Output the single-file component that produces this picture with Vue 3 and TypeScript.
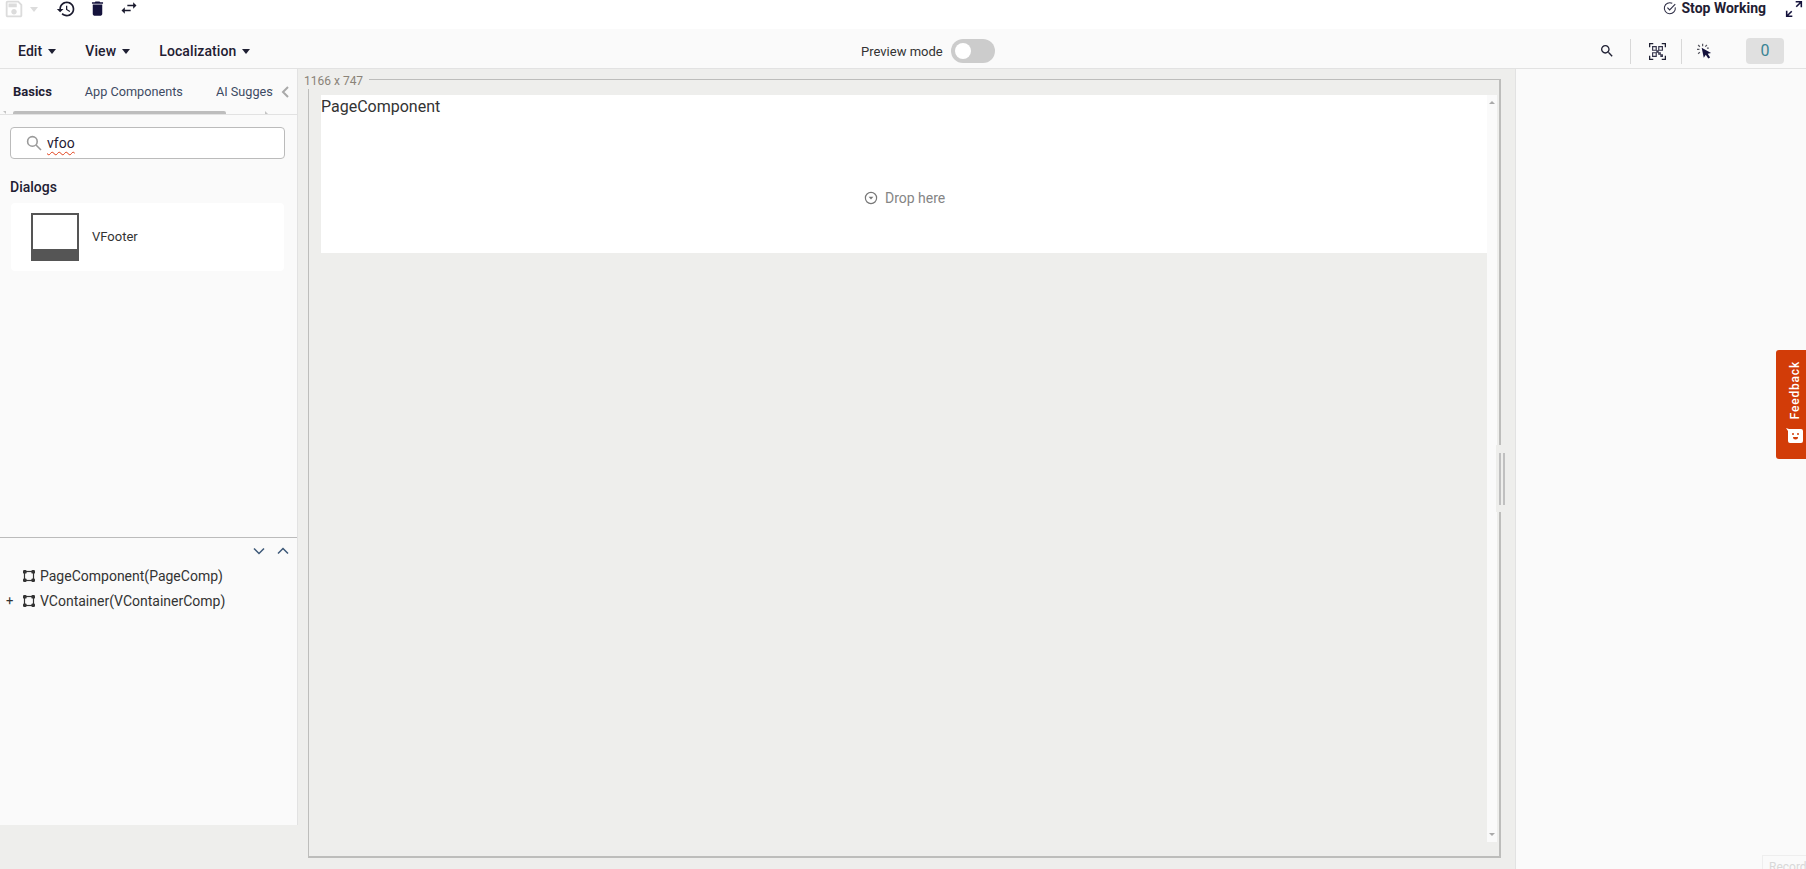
<script setup lang="ts">
const menus: string[] = ['Edit', 'View', 'Localization']
const tree: { label: string; expandable: boolean }[] = [
  { label: 'PageComponent(PageComp)', expandable: false },
  { label: 'VContainer(VContainerComp)', expandable: true },
]
</script>

<template>
  <div class="app">
    <header class="topbar">
      <div class="actions">
        <svg class="ic-save" viewBox="0 0 24 24"><path d="M17 3H5c-1.11 0-2 .9-2 2v14c0 1.1.89 2 2 2h14c1.1 0 2-.9 2-2V7l-4-4zm2 16H5V5h11.17L19 7.83V19zm-7-7c-1.66 0-3 1.34-3 3s1.34 3 3 3 3-1.34 3-3-1.34-3-3-3zM6 6h9v4H6z" /></svg>
        <span class="caret caret-light"></span>
        <svg class="ic-history" viewBox="0 0 24 24"><path d="M13 3c-4.97 0-9 4.03-9 9H1l3.89 3.89.07.14L9 12H6c0-3.87 3.13-7 7-7s7 3.13 7 7-3.13 7-7 7c-1.93 0-3.68-.79-4.94-2.06l-1.42 1.42C8.27 19.99 10.51 21 13 21c4.97 0 9-4.03 9-9s-4.03-9-9-9zm-1 5v5l4.28 2.54.72-1.21-3.5-2.08V8H12z" /></svg>
        <svg class="ic-delete" viewBox="0 0 24 24"><path d="M6 19c0 1.1.9 2 2 2h8c1.1 0 2-.9 2-2V7H6v12zM19 4h-3.5l-1-1h-5l-1 1H5v2h14V4z" /></svg>
        <svg class="ic-swap" viewBox="0 0 24 24"><path d="M6.99 11L3 15l3.99 4v-3H14v-2H6.99v-3zM21 9l-3.99-4v3H10v2h7.01v3L21 9z" /></svg>
      </div>
      <div class="status">
        <svg class="ic-check" viewBox="0 0 16 16" fill="none"><path d="M14 7.2A6.3 6.3 0 1 1 10.6 2.6" /><path d="M5 7.6l2.6 2.6L14 3.6" /></svg>
        <span class="stop">Stop Working</span>
        <svg class="ic-expand" viewBox="0 0 16 16" fill="none"><path d="M9.5 1.5h5v5M14.5 1.5L10 6" /><path d="M6.5 14.5h-5v-5M1.5 14.5L6 10" /></svg>
      </div>
    </header>

    <nav class="menubar">
      <div class="menus">
        <button v-for="m in menus" :key="m" class="menu">{{ m }}<span class="caret"></span></button>
      </div>
      <div class="preview">
        <span>Preview mode</span>
        <span class="toggle"><span class="knob"></span></span>
      </div>
      <div class="tools">
        <svg class="ic-search" viewBox="0 0 24 24"><path d="M15.5 14h-.79l-.28-.27C15.41 12.59 16 11.11 16 9.5 16 5.91 13.09 3 9.5 3S3 5.91 3 9.5 5.91 16 9.5 16c1.61 0 3.09-.59 4.23-1.57l.27.28v.79l5 4.99L20.49 19l-4.99-5zm-6 0C7.01 14 5 11.99 5 9.5S7.01 5 9.5 5 14 7.01 14 9.5 11.99 14 9.5 14z" /></svg>
        <i class="divider d1"></i>
        <svg class="ic-qr" viewBox="0 0 16 16" fill="none">
          <path class="qr-frame" d="M.6 4V.6H4M12 .6h3.4V4M15.4 12v3.4H12M4 15.4H.6V12" />
          <path class="qr-mark" d="M3.4 3.4h3.4v3.4H3.4zM9.2 3.4h3.4v3.4H9.2zM3.4 9.2h3.4v3.4H3.4zM9.2 9.2h1.4v1.4H9.2zM11.2 11.2h1.4v1.4h-1.4zM7.4 7.4h1.2v1.2H7.4z" />
        </svg>
        <i class="divider d2"></i>
        <svg class="ic-click" viewBox="0 0 16 16">
          <path class="spark" d="M6 .3v2.6M1.2 1.6l1.9 1.8M0 6.2h2.6M1.2 11l1.9-1.8M10.6 1.6L8.8 3.4M12.6 5h-2" />
          <path d="M5 4.5l2.2 10.6 2.2-3 2.6 4 2-1.3-2.6-4 3.6-.8z" />
        </svg>
        <span class="count">0</span>
      </div>
    </nav>

    <main class="main">
      <aside class="left">
        <div class="tabs">
          <span class="tab active">Basics</span>
          <span class="tab">App Components</span>
          <span class="tab clipped">AI Suggestions</span>
          <svg class="tab-prev" viewBox="0 0 10 14" fill="none"><path d="M8 2L3 7l5 5" /></svg>
        </div>
        <div class="tab-scroll">
          <i class="mini mini-left"></i>
          <span class="thumb"></span>
          <i class="mini mini-right"></i>
        </div>
        <div class="search">
          <svg viewBox="0 0 16 16" fill="none"><circle cx="6.4" cy="6.4" r="4.8" /><path d="M10 10l5 5" /></svg>
          <span class="query">vfoo</span>
        </div>
        <h3 class="group">Dialogs</h3>
        <div class="card">
          <span class="thumbnail"></span>
          <span class="card-label">VFooter</span>
        </div>

        <section class="tree">
          <div class="tree-head">
            <svg viewBox="0 0 12 8" fill="none"><path d="M1 1.5l5 5 5-5" /></svg>
            <svg viewBox="0 0 12 8" fill="none"><path d="M1 6.5l5-5 5 5" /></svg>
          </div>
          <div v-for="row in tree" :key="row.label" class="tree-row">
            <span class="plus">{{ row.expandable ? '+' : '' }}</span>
            <svg class="node" viewBox="0 0 12 12" fill="none">
              <rect x="1.5" y="1.5" width="9" height="9" />
              <rect class="dot" x="0" y="0" width="3.6" height="3.6" rx="1.2" />
              <rect class="dot" x="8.4" y="0" width="3.6" height="3.6" rx="1.2" />
              <rect class="dot" x="0" y="8.4" width="3.6" height="3.6" rx="1.2" />
              <rect class="dot" x="8.4" y="8.4" width="3.6" height="3.6" rx="1.2" />
            </svg>
            <span>{{ row.label }}</span>
          </div>
        </section>
      </aside>

      <section class="canvas">
        <fieldset class="frame">
          <legend>1166 x 747</legend>
          <div class="stage">
            <div class="viewport">
              <div class="page">
                <div class="page-title">PageComponent</div>
                <div class="drop">
                  <svg viewBox="0 0 14 14" fill="none"><circle cx="7" cy="7" r="5.6" /><path class="tri" d="M4.6 5.8h4.8L7 8.4z" /></svg>
                  <span>Drop here</span>
                </div>
              </div>
            </div>
            <div class="vscroll">
              <span class="arrow up"></span>
              <span class="arrow down"></span>
            </div>
          </div>
        </fieldset>
        <div class="resizer"><i></i><i></i></div>
      </section>

      <aside class="right"></aside>
    </main>

    <button class="feedback">
      <span>Feedback</span>
      <svg viewBox="0 0 18 18"><path d="M0 2l3 1h12a2 2 0 0 1 2 2v10a2 2 0 0 1-2 2H4a2 2 0 0 1-2-2V5z" fill="#fff" /><circle cx="7" cy="8" r="1" /><circle cx="12" cy="8" r="1" /><path d="M7 11h5a2.5 2.5 0 0 1-5 0z" /></svg>
    </button>
    <div class="record">Record</div>
  </div>
</template>

<style>
html, body { margin: 0; overflow: hidden; }
</style>

<style scoped>
.app {
  position: relative;
  display: flex;
  flex-direction: column;
  width: 1806px;
  height: 869px;
  overflow: hidden;
  background: #fff;
  color: #1f2033;
  font-family: Roboto, "Liberation Sans", sans-serif;
  font-size: 14px;
}
svg { display: block; flex: none; }

.topbar {
  display: flex;
  justify-content: space-between;
  height: 29px;
  flex: none;
}
.actions { display: flex; align-items: flex-start; padding-left: 3px; }
.ic-save { width: 22px; height: 22px; margin-top: -2px; fill: #dcdcdc; }
.caret {
  display: inline-block;
  width: 0;
  height: 0;
  border-left: 4.5px solid transparent;
  border-right: 4.5px solid transparent;
  border-top: 5px solid #1f2033;
}
.caret-light { border-top-color: #dcdcdc; margin: 7px 0 0 5px; }
.ic-history { width: 20px; height: 20px; margin: -1px 0 0 18px; fill: #1a1a2e; }
.ic-delete { width: 19px; height: 19px; margin: -1px 0 0 12px; fill: #14123c; }
.ic-swap { width: 20px; height: 20px; margin: -2px 0 0 12px; fill: #1a1a2e; }

.status { display: flex; align-items: flex-start; padding-right: 3px; }
.ic-check { width: 14px; height: 14px; margin: 1px 4px 0 0; stroke: #2c2c44; stroke-width: 1.2; }
.stop { font-weight: 700; font-size: 14px; line-height: 16px; color: #1f2033; margin-right: 19px; }
.ic-expand { width: 18px; height: 18px; stroke: #14123c; stroke-width: 1.4; }

.menubar {
  position: relative;
  display: flex;
  align-items: center;
  flex: none;
  box-sizing: border-box;
  height: 40px;
  padding-top: 5px;
  background: #fafafa;
  border-bottom: 1px solid #e2e2e2;
}
.menus { display: flex; padding-left: 18px; gap: 29px; }
.menu {
  display: flex;
  align-items: center;
  gap: 6px;
  padding: 0;
  border: 0;
  background: none;
  color: #1f2033;
  font: 500 14px/16px Roboto, "Liberation Sans", sans-serif;
  letter-spacing: .1px;
}
.preview {
  position: absolute;
  left: 861px;
  top: 10px;
  display: flex;
  align-items: center;
  gap: 8px;
  font-size: 13px;
  color: #333;
}
.toggle {
  display: block;
  width: 44px;
  height: 24px;
  border-radius: 12px;
  background: #ccc;
  position: relative;
}
.knob {
  position: absolute;
  left: 4px;
  top: 4px;
  width: 16px;
  height: 16px;
  border-radius: 50%;
  background: #fff;
}
.tools { display: flex; align-items: center; margin-left: auto; padding-right: 22px; }
.ic-search { width: 16px; height: 16px; fill: #1f2033; }
.divider { display: block; width: 1px; height: 25px; background: #d8d8d8; }
.d1 { margin: 0 18px 0 15px; }
.ic-qr { width: 17px; height: 17px; }
.qr-frame { stroke: #1f2033; stroke-width: 1.2; }
.qr-mark { stroke: #33334a; stroke-width: 1.1; }
.d2 { margin: 0 15px 0 15px; }
.ic-click { width: 15px; height: 16px; fill: #14123c; }
.spark { stroke: #55555f; stroke-width: 1.3; fill: none; }
.count {
  width: 38px;
  height: 26px;
  margin-left: 34px;
  border-radius: 4px;
  background: #e0e0e0;
  color: #3a8494;
  font-size: 16px;
  line-height: 26px;
  text-align: center;
}

.main { display: flex; flex: 1; min-height: 0; background: #eeeeec; }
.left {
  display: flex;
  flex-direction: column;
  box-sizing: border-box;
  width: 298px;
  height: 756px;
  flex: none;
  background: #fafafa;
  border-right: 1px solid #e2e2e2;
}
.tabs { position: relative; display: flex; box-sizing: border-box; height: 42px; flex: none; align-items: center; padding: 2px 0 0 13px; overflow: hidden; font-size: 12.7px; color: #3d4a63; }
.tab { flex: none; margin-right: 33px; }
.tab.active { font-size: 13px; font-weight: 700; color: #1f2033; margin-right: 33px; }
.clipped { width: 57px; overflow: hidden; white-space: nowrap; margin-right: 0; }
.tab-prev { position: absolute; left: 280px; top: 16px; width: 10px; height: 14px; stroke: #a9a9a9; stroke-width: 2; background: #fafafa; }
.tab-scroll { display: flex; align-items: flex-end; flex: none; height: 3px; padding-left: 3px; border-bottom: 1px solid #e2e2e2; }
.thumb { display: block; width: 213px; height: 3px; margin-left: 7px; border-radius: 2px 2px 0 0; background: #bdbdbd; }
.mini { display: block; width: 0; height: 0; border-style: solid; }
.mini-left { border-width: 0 3px 3px 0; border-color: transparent #c4c4c4 transparent transparent; }
.mini-right { margin-left: 39px; border-width: 3px 0 0 3px; border-color: transparent transparent transparent #c4c4c4; }
.search {
  display: flex;
  align-items: center;
  box-sizing: border-box;
  height: 32px;
  margin: 12px 12px 0 10px;
  padding-left: 15px;
  border: 1px solid #bbb;
  border-radius: 4px;
  background: #fff;
}
.search svg { width: 16px; height: 16px; margin-right: 5px; stroke: #9a9a9a; stroke-width: 1.6; }
.query { font-size: 14px; color: #1f2033; text-decoration: underline wavy #e0401a 1.2px; text-underline-offset: 3px; }
.group { margin: 20px 0 0 10px; font-size: 14px; line-height: 16px; font-weight: 500; color: #1f2033; }
.card {
  display: flex;
  align-items: center;
  height: 68px;
  margin: 8px 13px 0 11px;
  padding-left: 20px;
  border-radius: 4px;
  background: #fff;
}
.thumbnail {
  box-sizing: border-box;
  width: 48px;
  height: 48px;
  border: 2px solid #555;
  border-bottom-width: 12px;
  background: #fff;
}
.card-label { margin-left: 13px; padding-bottom: 2px; font-size: 13px; color: #333; }

.tree { margin-top: auto; height: 288px; flex: none; border-top: 1px solid #bbb; box-sizing: border-box; }
.tree-head { display: flex; justify-content: flex-end; gap: 12px; padding: 9px 8px 0 0; height: 8px; margin-bottom: 8px; }
.tree-head svg { width: 12px; height: 8px; stroke: #3d5878; stroke-width: 1.5; }
.tree-row { display: flex; align-items: center; height: 25px; font-size: 14px; color: #333; }
.plus { width: 23px; padding-left: 6px; box-sizing: border-box; font-size: 13px; line-height: 1; flex: none; }
.node { width: 12px; height: 12px; margin-right: 5px; stroke: #333; stroke-width: 1.2; }
.dot { fill: #333; stroke: none; }

.canvas { position: relative; flex: 1; min-width: 0; padding: 0 0 0 10px; box-sizing: border-box; }
.frame {
  box-sizing: border-box;
  width: 1193px;
  height: 789px;
  margin: 0;
  padding: 6px 3px 0 12px;
  border: 1px solid #bdbdbb;
  border-width: 1px 2px 2px 1px;
  min-width: 0;
}
legend {
  margin-left: -17px;
  padding: 4px 6px 0 0;
  font-size: 12px;
  line-height: 16px;
  background: #eeeeec;
  color: #8a8378;
  white-space: nowrap;
}
.stage { display: flex; width: 1176px; height: 747px; }
.viewport { flex: 1; min-width: 0; }
.page { position: relative; height: 158px; background: #fff; }
.page-title { padding-top: 2px; font-size: 16px; line-height: 20px; color: #333; }
.drop {
  position: absolute;
  left: 543px;
  top: 93px;
  display: flex;
  align-items: center;
  gap: 7px;
  font-size: 14px;
  line-height: 20px;
  color: #858585;
}
.drop svg { width: 14px; height: 14px; stroke: #777; stroke-width: 1.2; }
.tri { fill: #777; stroke: none; }
.vscroll { position: relative; width: 10px; background: #fafafa; }
.arrow { position: absolute; left: 2px; width: 0; height: 0; border-left: 3px solid transparent; border-right: 3px solid transparent; }
.up { top: 6px; border-bottom: 3px solid #aaa; }
.down { bottom: 6px; border-top: 3px solid #aaa; }
.resizer {
  position: absolute;
  left: 1198px;
  top: 376px;
  display: flex;
  gap: 2px;
  box-sizing: border-box;
  width: 11px;
  height: 67px;
  padding: 8px 0 0 3px;
  background: #eeeeec;
}
.resizer i { display: block; width: 2px; height: 52px; background: #c0c0c0; }
.right { width: 291px; flex: none; box-sizing: border-box; background: #fafafa; border-left: 1px solid #e2e2e2; }

.feedback {
  position: absolute;
  left: 1776px;
  top: 350px;
  display: flex;
  flex-direction: column;
  align-items: center;
  gap: 7px;
  box-sizing: border-box;
  width: 30px;
  height: 109px;
  padding: 11px 0 0 8px;
  border: 0;
  border-radius: 3px 0 0 3px;
  background: #d23c08;
  color: #fff;
  font: 500 12px/14px Roboto, "Liberation Sans", sans-serif;
  letter-spacing: .8px;
}
.feedback span { writing-mode: vertical-rl; transform: rotate(180deg); }
.feedback svg { width: 18px; height: 18px; fill: #d23c08; }
.record {
  position: absolute;
  left: 1762px;
  top: 855px;
  width: 44px;
  height: 14px;
  box-sizing: border-box;
  padding: 4px 0 0 6px;
  border: 1px solid #eee;
  border-width: 1px 0 0 1px;
  background: #fafafa;
  color: #d8d8d8;
  font-size: 12px;
  line-height: 14px;
  overflow: hidden;
}
</style>
